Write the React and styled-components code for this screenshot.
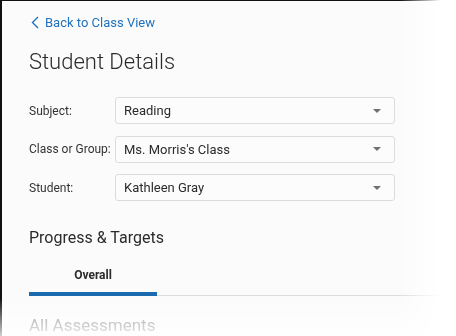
import React from 'react'
import styled, { createGlobalStyle } from 'styled-components'

const GlobalStyle = createGlobalStyle`
  html, body { margin: 0; padding: 0; background: #ffffff; }
  body { font-family: Roboto, "Liberation Sans", sans-serif; }
`

const Frame = styled.div`
  width: 456px;
  height: 336px;
  overflow: hidden;
  background: #ffffff;
`

const Page = styled.div`
  width: 440px;
  height: 336px;
  box-sizing: border-box;
  background: #fbfbfb;
  border-left: 2px solid #111;
  border-top: 1px solid #111;
  padding: 13px 0 0 27px;
  -webkit-mask-image: linear-gradient(to right, #000 400px, transparent 440px),
    linear-gradient(to bottom, #000 298px, rgba(0,0,0,0.2) 336px);
  -webkit-mask-composite: source-in;
  mask-image: linear-gradient(to right, #000 400px, transparent 440px),
    linear-gradient(to bottom, #000 298px, rgba(0,0,0,0.2) 336px);
  mask-composite: intersect;
`

const BackLink = styled.a`
  display: flex;
  align-items: center;
  gap: 6px;
  height: 16px;
  margin-left: 2px;
  color: #1f72bd;
  font-size: 13px;
  text-decoration: none;
`

const Title = styled.h1`
  margin: 18px 0 0;
  font-size: 22px;
  font-weight: 300;
  color: #2b2b2b;
  line-height: 28px;
`

const Form = styled.div`
  margin-top: 21px;
  display: flex;
  flex-direction: column;
  gap: 11.5px;
`

const Row = styled.div`
  display: flex;
  align-items: center;
`

const Label = styled.label`
  width: 86px;
  font-size: 12px;
  color: #333;
`

const Select = styled.div`
  width: 280px;
  height: 27px;
  box-sizing: border-box;
  border: 1px solid #dcdcdc;
  border-radius: 3px;
  background: #fcfcfc;
  display: flex;
  align-items: center;
  justify-content: space-between;
  padding: 0 13px 0 8px;
  font-size: 13px;
  color: #2b2b2b;
`

const Caret = styled.span`
  width: 0;
  height: 0;
  border-left: 4px solid transparent;
  border-right: 4px solid transparent;
  border-top: 4px solid #707070;
`

const Section = styled.h2`
  margin: 26px 0 0;
  font-size: 16px;
  font-weight: 400;
  color: #2b2b2b;
  line-height: 22px;
`

const Tabs = styled.div`
  margin-top: 19px;
  display: flex;
  border-bottom: 1px solid #dddddd;
`

const Tab = styled.div`
  width: 128px;
  text-align: center;
  font-size: 12px;
  font-weight: 700;
  color: #2b2b2b;
  padding-bottom: 10px;
  margin-bottom: -1px;
  border-bottom: 4px solid ${p => (p.active ? '#1a6ab0' : 'transparent')};
`

const Faded = styled.div`
  margin-top: 19px;
  font-size: 17px;
  color: #8a8a8a;
`

const fields = [
  { label: 'Subject:', value: 'Reading' },
  { label: 'Class or Group:', value: "Ms. Morris's Class" },
  { label: 'Student:', value: 'Kathleen Gray' },
]

export default function App() {
  return (
    <Frame>
      <GlobalStyle />
      <Page>
        <BackLink href="#">
          <svg width="8" height="13" viewBox="0 0 8 13">
            <path d="M7 1 L1.5 6.5 L7 12" fill="none" stroke="#1f72bd" strokeWidth="1.4" />
          </svg>
          Back to Class View
        </BackLink>
        <Title>Student Details</Title>
        <Form>
          {fields.map(f => (
            <Row key={f.label}>
              <Label>{f.label}</Label>
              <Select>
                {f.value}
                <Caret />
              </Select>
            </Row>
          ))}
        </Form>
        <Section>Progress &amp; Targets</Section>
        <Tabs>
          <Tab active>Overall</Tab>
        </Tabs>
        <Faded>All Assessments</Faded>
      </Page>
    </Frame>
  )
}
